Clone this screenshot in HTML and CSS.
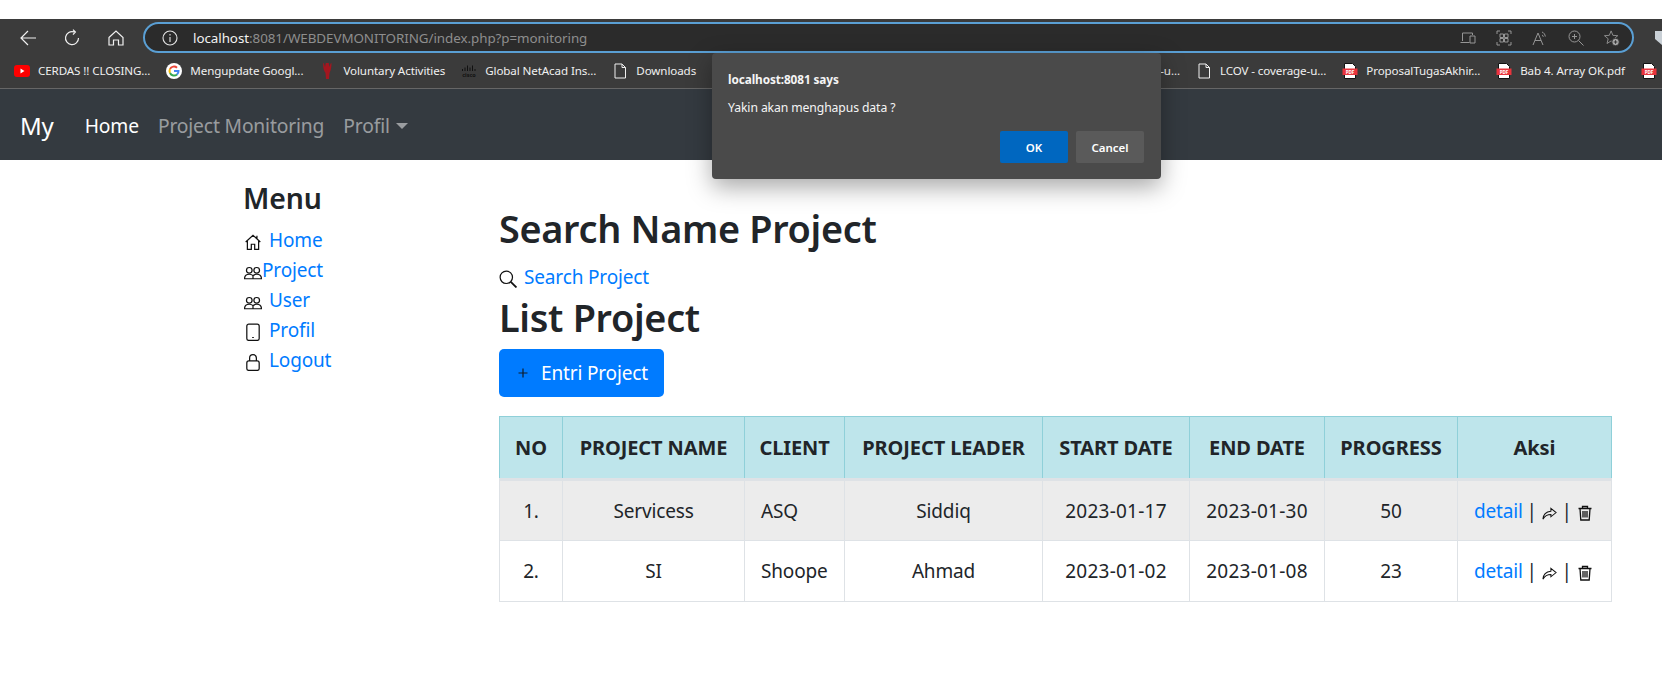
FILE: index.html
```html
<!DOCTYPE html>
<html lang="id">
<head>
<meta charset="utf-8">
<title>Monitoring</title>
<link rel="stylesheet" href="styles.css">
</head>
<body>
<div class="top-strip"></div>
<header class="browser">
  <div class="toolbar">
    <svg class="tb-icon" viewBox="0 0 18 18"><path d="M17 9H2M9 2 2 9l7 7"/></svg>
    <svg class="tb-icon" viewBox="0 0 18 18"><path d="M15.5 9A6.5 6.5 0 1 1 11 2.900M10 .6l2.400 2.400L10 5.600"/></svg>
    <svg class="tb-icon" viewBox="0 0 18 18"><path d="M2 8.500 9 2l7 6.500V16h-4.500v-5h-5v5H2z"/></svg>
    <div class="address">
      <svg class="info" viewBox="0 0 16 16"><circle cx="8" cy="8" r="7"/><path d="M8 7v5M8 4v1.400"/></svg>
      <span class="url"><span class="url-host">localhost</span>:8081/WEBDEVMONITORING/index.php?p=monitoring</span>
      <div class="addr-tools">
        <svg viewBox="0 0 16 16"><path d="M2.500 3h10v2M2.500 3v8M0.500 12.500h9M10 6h5v7h-5z"/></svg>
        <svg viewBox="0 0 16 16"><path d="M1 4V1h3M12 1h3v3M1 12v3h3M12 15h3v-3M4 4h3.500v3.500H4zM8.500 4H12v3.500H8.500zM4 8.500h3.500V12H4zM8.500 8.500H12V12H8.500z"/></svg>
        <svg viewBox="0 0 16 16"><path d="M1 15 6 3l5 12M3 10.500h6M10 2c2 .8 3 2.300 3.300 4.500M10 5c.8.300 1.200 1 1.300 1.800"/></svg>
        <svg viewBox="0 0 16 16"><circle cx="6.500" cy="6.500" r="5.500"/><path d="m10.500 10.500 5 5M4 6.500h5M6.500 4v5"/></svg>
        <svg viewBox="0 0 18 18"><path d="M8 1 10 6l5.500.4-4.200 3.500 1.300 5.300L8 12.300l-4.600 2.900 1.300-5.300L.5 6.400 6 6z"/><circle class="star-plus" cx="13" cy="13.500" r="4.200"/><path class="star-sign" d="M11 13.500h4M13 11.500v4"/></svg>
      </div>
    </div>
    <svg class="shield" viewBox="0 0 16 16"><path d="M1 1h14v8l-7 6-7-6z"/></svg>
  </div>
  <div class="bookmarks">
    <div class="bm-group">
      <a class="bm"><svg viewBox="0 0 16 16"><rect y="2" width="16" height="12" rx="3" fill="#f00"/><path d="m6.500 5.500 4 2.500-4 2.500z" fill="#fff"/></svg>CERDAS !! CLOSING...</a>
      <a class="bm"><svg viewBox="0 0 16 16"><circle cx="8" cy="8" r="8" fill="#fff"/><path d="M4 6a4.500 4.500 0 0 1 7-1.300" fill="none" stroke="#ea4335" stroke-width="2"/><path d="M4 6a4.500 4.500 0 0 0 0 4" fill="none" stroke="#fbbc05" stroke-width="2"/><path d="M4 10a4.500 4.500 0 0 0 7 1.500" fill="none" stroke="#34a853" stroke-width="2"/><path d="M8 8h4.500a4.500 4.500 0 0 1-1.500 3.500" fill="none" stroke="#4285f4" stroke-width="2"/></svg>Mengupdate Googl...</a>
      <a class="bm"><svg viewBox="0 0 16 16"><path d="M4 0c1 0 1.500 2 2 4 .5-2 .5-4 1-4h2.500c.5 0 .5 2 1 4 .5-2 1-4 2-4 0 5-1 8-2 10l-.5 6H7l-.5-6C5 8 4 5 4 0z" fill="#a3161f"/></svg>Voluntary Activities</a>
      <a class="bm"><svg viewBox="0 0 16 16"><path d="M1.500 5v2M4 3.500V7M6.500 1.500V7M9 3.500V7M11.500 1.500V7M14 5v2" stroke="#111" fill="none" transform="translate(0 1)"/><text class="cisco-label" x="8" y="14">cisco</text></svg>Global NetAcad Ins...</a>
      <a class="bm"><svg class="doc" viewBox="0 0 16 16"><path d="M3 1h7l3.500 3.500V15H3zM10 1v3.500h3.500"/></svg>Downloads</a>
    </div>
    <div class="bm-group bm-right">
      <a class="bm"><svg class="doc" viewBox="0 0 16 16"><path d="M3 1h7l3.500 3.500V15H3zM10 1v3.500h3.500"/></svg>LCOV - coverage-u...</a>
      <a class="bm"><svg class="doc" viewBox="0 0 16 16"><path d="M3 1h7l3.500 3.500V15H3zM10 1v3.500h3.500"/></svg>LCOV - coverage-u...</a>
      <a class="bm"><svg viewBox="0 0 16 16"><path d="M2.500.5h8l3 3v12h-11z" fill="#fff" stroke="#111"/><rect y="5.500" x="0.500" width="15" height="6.500" fill="#e8343c"/><text class="pdf-label" x="8" y="10.500">PDF</text></svg>ProposalTugasAkhir...</a>
      <a class="bm"><svg viewBox="0 0 16 16"><path d="M2.500.5h8l3 3v12h-11z" fill="#fff" stroke="#111"/><rect y="5.500" x="0.500" width="15" height="6.500" fill="#e8343c"/><text class="pdf-label" x="8" y="10.500">PDF</text></svg>Bab 4. Array OK.pdf</a>
      <a class="bm bm-last"><svg viewBox="0 0 16 16"><path d="M2.500.5h8l3 3v12h-11z" fill="#fff" stroke="#111"/><rect y="5.500" x="0.500" width="15" height="6.500" fill="#e8343c"/><text class="pdf-label" x="8" y="10.500">PDF</text></svg></a>
    </div>
  </div>
</header>

<nav class="navbar">
  <a class="brand">My</a>
  <a class="nav-link active">Home</a>
  <a class="nav-link">Project Monitoring</a>
  <a class="nav-link">Profil<span class="caret"></span></a>
</nav>

<main class="page">
  <aside class="sidebar">
    <h4 class="menu-title">Menu</h4>
    <ul class="menu">
      <li><svg class="ic" viewBox="0 0 16 16"><path d="M1.500 8 8 2l6.500 6M3 7v7.500h3.500V10h3v4.500H13V7M11.500 2.500v2.300"/></svg><a class="lnk gap">Home</a></li>
      <li><svg class="ic" viewBox="0 0 16 16"><circle cx="4.700" cy="6.500" r="2.500"/><circle cx="11.300" cy="6.500" r="2.500"/><path d="M.5 14c0-2.500 1.500-4 4.200-4 1.500 0 2.600.5 3.300 1.300.7-.8 1.800-1.300 3.300-1.300 2.700 0 4.200 1.500 4.200 4zM8 11.300V14"/></svg><a class="lnk">Project</a></li>
      <li><svg class="ic" viewBox="0 0 16 16"><circle cx="4.700" cy="6.500" r="2.500"/><circle cx="11.300" cy="6.500" r="2.500"/><path d="M.5 14c0-2.500 1.500-4 4.200-4 1.500 0 2.600.5 3.300 1.300.7-.8 1.800-1.300 3.300-1.300 2.700 0 4.200 1.500 4.200 4zM8 11.300V14"/></svg><a class="lnk gap">User</a></li>
      <li><svg class="ic" viewBox="0 0 16 16"><rect x="2.500" y="1" width="11" height="14.500" rx="1.800"/><path d="M8 12.500v.8" stroke-width="1.500"/></svg><a class="lnk gap">Profil</a></li>
      <li><svg class="ic" viewBox="0 0 16 16"><rect x="2.500" y="7" width="11" height="8.500" rx="1.800"/><path d="M5 7V4.500a3 3 0 0 1 6 0V7"/></svg><a class="lnk gap">Logout</a></li>
    </ul>
  </aside>
  <section class="content">
    <h2 class="head head-first">Search Name Project</h2>
    <div class="search"><svg class="ic" viewBox="0 0 16 16"><circle cx="6.500" cy="6.500" r="5.500"/><path d="m10.500 10.500 5 5" stroke-width="1.600"/></svg><a class="lnk gap">Search Project</a></div>
    <h2 class="head head-second">List Project</h2>
    <a class="btn"><svg class="plus" viewBox="0 0 16 16"><path d="M8 3.500v9M3.500 8h9"/></svg>Entri Project</a>
    <table class="grid">
      <colgroup>
        <col class="c-no"><col class="c-name"><col class="c-client"><col class="c-leader"><col class="c-start"><col class="c-end"><col class="c-prog"><col class="c-act">
      </colgroup>
      <thead>
        <tr><th>NO</th><th>PROJECT NAME</th><th>CLIENT</th><th>PROJECT LEADER</th><th>START DATE</th><th>END DATE</th><th>PROGRESS</th><th>Aksi</th></tr>
      </thead>
      <tbody>
        <tr class="odd">
          <td>1.</td><td>Servicess</td><td class="left">ASQ</td><td>Siddiq</td><td class="date">2023-01-17</td><td class="date">2023-01-30</td><td>50</td>
          <td class="actions"><a class="lnk">detail</a> | <svg class="act" viewBox="0 0 16 16"><path d="M9.500 2.500 15 7l-5.500 4.500V9C6 9 3 10.500 1 14c.3-4.500 3.500-8 8.500-8.500z"/></svg> | <svg class="act trash" viewBox="0 0 16 16"><path d="M1.500 3.500h13M5.500 3.500V1.500h5v2M3 3.500l.8 11.500h8.400L13 3.500M6 6v6.500M8 6v6.500M10 6v6.500"/></svg></td>
        </tr>
        <tr>
          <td>2.</td><td>SI</td><td class="left">Shoope</td><td>Ahmad</td><td class="date">2023-01-02</td><td class="date">2023-01-08</td><td>23</td>
          <td class="actions"><a class="lnk">detail</a> | <svg class="act" viewBox="0 0 16 16"><path d="M9.500 2.500 15 7l-5.500 4.500V9C6 9 3 10.500 1 14c.3-4.500 3.500-8 8.500-8.500z"/></svg> | <svg class="act trash" viewBox="0 0 16 16"><path d="M1.500 3.500h13M5.500 3.500V1.500h5v2M3 3.500l.8 11.500h8.400L13 3.500M6 6v6.500M8 6v6.500M10 6v6.500"/></svg></td>
        </tr>
      </tbody>
    </table>
  </section>
</main>

<div class="dialog" role="dialog">
  <div class="dlg-title">localhost:8081 says</div>
  <div class="dlg-msg">Yakin akan menghapus data ?</div>
  <div class="dlg-actions">
    <button class="dlg-btn ok">OK</button>
    <button class="dlg-btn cancel">Cancel</button>
  </div>
</div>
</body>
</html>
```
FILE: styles.css
```css
* { box-sizing: border-box; }
html, body { margin: 0; height: 100%; overflow: hidden; }
body {
  position: relative;
  background: #fff;
  color: #212529;
  font-family: "Noto Sans", sans-serif;
  font-size: 19px;
  line-height: 30px;
  letter-spacing: -0.15px;
}
svg { display: block; flex: none; }

.top-strip { height: 19px; background: #fff; }

.browser { background: #3b3b3b; }
.toolbar {
  height: 34px;
  display: flex;
  align-items: center;
  padding: 3px 0 0 19px;
  overflow: hidden;
}
.tb-icon {
  width: 18px;
  height: 18px;
  margin-right: 26px;
  fill: none;
  stroke: #f0f0f0;
  stroke-width: 1.2;
}
.tb-icon:nth-of-type(3) { margin-right: 18px; }
.address {
  width: 1491px;
  height: 31px;
  flex: none;
  display: flex;
  align-items: center;
  border: 2px solid #5a9fd4;
  border-radius: 16px;
  background: #2b2b2b;
  padding: 0 12px 0 17px;
}
.info {
  width: 16px;
  height: 16px;
  margin-right: 15px;
  fill: none;
  stroke: #e4e4e4;
  stroke-width: 1.1;
}
.url {
  font-size: 13.4px;
  line-height: 20px;
  letter-spacing: -0.06px;
  color: #8e8e8e;
  white-space: nowrap;
}
.url-host { color: #f2f2f2; }
.addr-tools {
  margin-left: auto;
  display: flex;
  gap: 20px;
  align-items: center;
}
.addr-tools svg {
  width: 16px;
  height: 16px;
  fill: none;
  stroke: #969696;
  stroke-width: 1;
}
.addr-tools .star-plus { fill: #a8a8a8; stroke: #2b2b2b; }
.addr-tools .star-sign { stroke: #2b2b2b; }
.shield {
  width: 16px;
  height: 16px;
  margin-left: 20px;
  fill: #c9d0d6;
}

.bookmarks {
  height: 36px;
  display: flex;
  align-items: center;
  justify-content: space-between;
  overflow: hidden;
  padding-left: 14px;
  border-bottom: 1px solid #666;
  font-size: 11.6px;
  letter-spacing: -0.1px;
  color: #f0f0f0;
}
.bm-group { display: flex; align-items: center; gap: 16px; flex: none; }
.bm {
  display: flex;
  align-items: center;
  gap: 8px;
  white-space: nowrap;
}
.bm svg { width: 16px; height: 16px; }
.bm .doc { fill: none; stroke: #f0f0f0; stroke-width: 1; }
.pdf-label {
  fill: #fff;
  font-size: 4.6px;
  font-weight: 700;
  letter-spacing: 0;
  text-anchor: middle;
}
.cisco-label {
  fill: #111;
  font-size: 5.5px;
  font-weight: 700;
  letter-spacing: 0;
  text-anchor: middle;
}
.bm-last { width: 21px; }

.navbar {
  height: 71px;
  display: flex;
  align-items: center;
  background: #343a40;
  padding: 2px 20px 0;
  font-size: 19.25px;
}
.brand { font-size: 24px; color: #fff; margin-right: 31px; }
.nav-link { color: rgba(255, 255, 255, 0.5); margin-right: 19px; display: flex; align-items: center; }
.nav-link.active { color: #fff; }
.caret {
  width: 0;
  height: 0;
  margin-left: 6px;
  border-top: 6px solid currentColor;
  border-left: 6px solid transparent;
  border-right: 6px solid transparent;
}

.page { display: flex; padding-left: 244px; }
.sidebar { width: 255px; flex: none; padding-top: 20px; }
.menu-title { margin: 0 0 9px -1px; font-size: 28.4px; line-height: 36px; font-weight: 600; }
.menu { list-style: none; margin: 0; padding: 0; }
.menu li { display: flex; align-items: center; height: 30px; }
.ic {
  width: 18px;
  height: 18px;
  margin-top: 3px;
  fill: none;
  stroke: #111;
  stroke-width: 1.1;
}
.lnk { color: #007bff; }
.lnk.gap { margin-left: 7px; }
.content { width: 1112px; flex: none; padding-top: 45px; }
.head { font-size: 37.8px; line-height: 48px; font-weight: 600; letter-spacing: -0.3px; margin: 0; }
.head-first { margin-bottom: 9px; }
.head-second { margin-bottom: 7px; }
.search { display: flex; align-items: center; height: 30px; margin-bottom: 2px; }
.btn {
  display: inline-flex;
  align-items: center;
  height: 48px;
  width: 165px;
  padding-left: 16px;
  background: #007bff;
  color: #fff;
  border-radius: 5px;
}
.plus { width: 16px; height: 16px; margin-right: 10px; fill: none; stroke: #101c28; stroke-width: 1.2; }

.grid {
  display: table;
  margin-top: 19px;
  width: 1112px;
  table-layout: fixed;
  border-collapse: collapse;
}
.c-no { width: 63px; } .c-name { width: 182px; } .c-client { width: 100px; } .c-leader { width: 198px; }
.c-start { width: 147px; } .c-end { width: 135px; } .c-prog { width: 133px; } .c-act { width: 154px; }
.grid th, .grid td { text-align: center; padding: 0; white-space: nowrap; }
.grid th {
  height: 63px;
  background: #bee5eb;
  border: 1px solid #8fd0d9;
  border-bottom: 3px solid #dee2e6;
  font-weight: 700;
  font-size: 20px;
  letter-spacing: -0.1px;
}
.grid td { height: 61px; border: 1px solid #dee2e6; }
.grid td.left { text-align: left; padding-left: 16px; }
.grid td.date { letter-spacing: 0.25px; }
.odd td { background: #ececec; }
.grid td.actions { text-align: left; padding-left: 16px; word-spacing: -1px; }
.act { display: inline-block; width: 15px; height: 15px; margin: 0 1px; vertical-align: -3px; fill: none; stroke: #111; stroke-width: 1.1; }
.trash { width: 16px; height: 16px; stroke-width: 1.3; margin-left: 1px; }

.dialog {
  position: absolute;
  left: 712px;
  top: 53px;
  width: 449px;
  height: 126px;
  padding: 16px;
  background: #4a4a4a;
  border-radius: 4px;
  box-shadow: 0 8px 24px rgba(0, 0, 0, 0.35);
  color: #f5f5f5;
  font-size: 12.2px;
  line-height: 20px;
  letter-spacing: -0.1px;
}
.dlg-title { font-weight: 700; font-size: 11.8px; margin-bottom: 9px; }
.dlg-actions { display: flex; justify-content: flex-end; gap: 8px; margin-top: 13px; padding-right: 1px; }
.dlg-btn {
  width: 68px;
  height: 32px;
  border: 0;
  border-radius: 2px;
  color: #fff;
  font: 600 11.5px "Noto Sans", sans-serif;
}
.ok { background: #0067c0; }
.cancel { background: #5a5a5a; }
```
